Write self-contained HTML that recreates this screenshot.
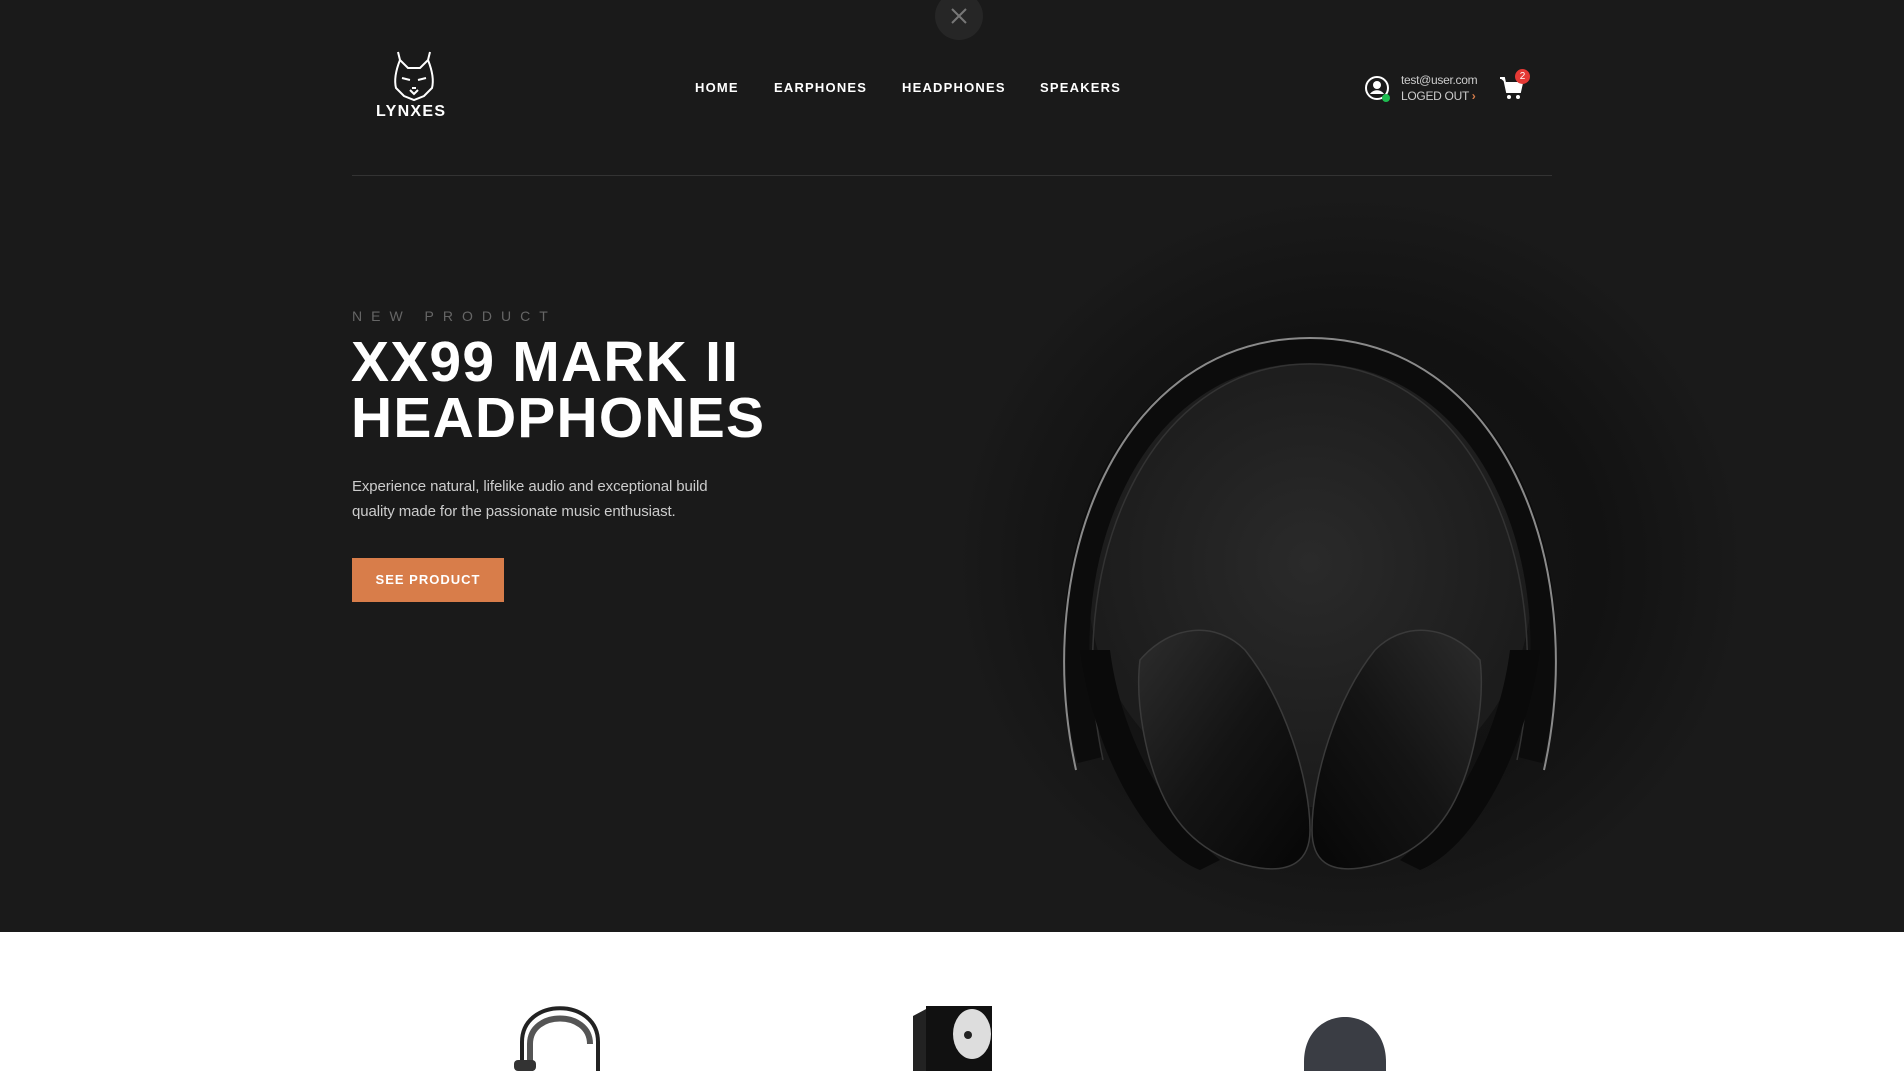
<!DOCTYPE html>
<html><head><meta charset="utf-8"><style>
*{margin:0;padding:0;box-sizing:border-box}
html,body{width:1904px;height:1071px;overflow:hidden}
body{background:#fff;font-family:"Liberation Sans",sans-serif;position:relative}
.hero{position:absolute;left:0;top:0;width:1904px;height:932px;background:#1a1a1a;overflow:hidden}
.abs{position:absolute}
.nav a{position:absolute;top:80px;color:#fff;font-size:13px;font-weight:bold;letter-spacing:1.2px;text-decoration:none}
</style></head><body>
<div class="hero">
  <div class="abs" style="left:960px;top:200px;width:780px;height:730px;background:radial-gradient(ellipse at 50% 50%,#181818 0%,#121212 45%,#1a1a1a 72%);"></div>
  <svg class="abs" style="left:0;top:0" width="1904" height="932">
    <defs>
      <radialGradient id="inner" cx="0.5" cy="0.45" r="0.5"><stop offset="0" stop-color="#2a2a2a"/><stop offset="1" stop-color="#1c1c1c"/></radialGradient>
      <linearGradient id="cup" x1="0" y1="0" x2="1" y2="1"><stop offset="0" stop-color="#2c2c2c"/><stop offset="0.5" stop-color="#141414"/><stop offset="1" stop-color="#060606"/></linearGradient>
      <linearGradient id="cup2" x1="1" y1="0" x2="0" y2="1"><stop offset="0" stop-color="#2c2c2c"/><stop offset="0.5" stop-color="#141414"/><stop offset="1" stop-color="#060606"/></linearGradient>
    </defs>
    <circle cx="1310" cy="585" r="222" fill="url(#inner)"/>
    <path d="M1090 760 C1040 560 1130 350 1310 350 C1490 350 1580 560 1530 760" fill="none" stroke="#0c0c0c" stroke-width="26"/>
    <path d="M1076 770 C1030 560 1120 338 1310 338 C1500 338 1590 560 1544 770" fill="none" stroke="#8a8a8a" stroke-width="2"/>
    <path d="M1103 760 C1062 570 1145 364 1310 364 C1475 364 1558 570 1517 760" fill="none" stroke="#333" stroke-width="1.5"/>
    <path d="M1080 650 C1095 760 1150 850 1200 870 L1220 860 C1160 810 1120 730 1110 650 Z" fill="#0a0a0a"/>
    <path d="M1540 650 C1525 760 1470 850 1420 870 L1400 860 C1460 810 1500 730 1510 650 Z" fill="#0a0a0a"/>
    <path d="M1140 660 C1170 625 1215 620 1245 650 C1285 700 1310 780 1310 830 C1310 862 1290 872 1260 868 C1220 862 1185 840 1165 800 C1145 760 1135 700 1140 660 Z" fill="url(#cup)" stroke="#3a3a3a" stroke-width="1.5"/>
    <path d="M1480 660 C1450 625 1405 620 1375 650 C1335 700 1312 780 1312 830 C1312 862 1330 872 1360 868 C1400 862 1435 840 1455 800 C1475 760 1485 700 1480 660 Z" fill="url(#cup2)" stroke="#3a3a3a" stroke-width="1.5"/>
  </svg>
  <svg class="abs" style="left:935px;top:-8px" width="48" height="48"><circle cx="24" cy="24" r="24" fill="#262626"/><path d="M17 17 L31 31 M31 17 L17 31" stroke="#777" stroke-width="2"/></svg>
  <svg class="abs" style="left:390px;top:50px" width="48" height="52" fill="none" stroke="#fff" stroke-width="2">
    <path d="M8 2 L10 10 M40 2 L38 10 M10 10 C6 20 4 30 6 38 L14 46 L24 50 L34 46 L42 38 C44 30 42 20 38 10 L30 18 L18 18 Z"/>
    <path d="M12 28 L20 30 M36 28 L28 30 M20 40 L24 44 L28 40 M22 38 L26 38"/>
  </svg>
  <div class="abs" style="left:376px;top:103px;color:#fff;font-size:16px;font-weight:bold;letter-spacing:1.3px">LYNXES</div>
  <div class="nav"><a style="left:695px">HOME</a><a style="left:774px">EARPHONES</a><a style="left:902px">HEADPHONES</a><a style="left:1040px">SPEAKERS</a></div>
  <svg class="abs" style="left:1364px;top:75px" width="30" height="30"><circle cx="13" cy="13" r="11" fill="none" stroke="#fff" stroke-width="2"/><circle cx="13" cy="10" r="4" fill="#fff"/><path d="M6 19 C9 14 17 14 20 19 Z" fill="#fff"/><circle cx="22" cy="23" r="4" fill="#1ebc50"/></svg>
  <div class="abs" style="left:1401px;top:73px;color:#ccc;font-size:12px;letter-spacing:-0.3px">test@user.com</div>
  <div class="abs" style="left:1401px;top:89px;color:#ccc;font-size:12px;letter-spacing:-0.3px">LOGED OUT <span style="color:#d87d4a;font-weight:bold">&#8250;</span></div>
  <svg class="abs" style="left:1498px;top:74px" width="28" height="28"><path d="M2 4 L6 4 L9 18 L22 18 L24 9 L8 9" fill="#fff" stroke="#fff" stroke-width="2"/><circle cx="11" cy="23" r="2" fill="#fff"/><circle cx="20" cy="23" r="2" fill="#fff"/></svg>
  <div class="abs" style="left:1515px;top:69px;width:15px;height:15px;border-radius:50%;background:#e53935;color:#fff;font-size:10px;text-align:center;line-height:15px">2</div>
  <div class="abs" style="left:352px;top:175px;width:1200px;height:1px;background:#333"></div>
  <div class="abs" style="left:352px;top:308px;color:#666;font-size:14px;letter-spacing:9px">NEW PRODUCT</div>
  <div class="abs" style="left:351px;top:334px;color:#fff;font-size:57px;font-weight:bold;line-height:56px;letter-spacing:1.2px">XX99 MARK II<br>HEADPHONES</div>
  <div class="abs" style="left:352px;top:474px;color:#ccc;font-size:15px;line-height:25px;letter-spacing:-0.1px">Experience natural, lifelike audio and exceptional build<br>quality made for the passionate music enthusiast.</div>
  <div class="abs" style="left:352px;top:558px;width:152px;height:44px;background:#d87d4a;color:#fff;font-size:13px;font-weight:bold;letter-spacing:1px;text-align:center;line-height:44px">SEE PRODUCT</div>
</div>
<svg class="abs" style="left:0;top:932px" width="1904" height="139">
  <path d="M522 139 L522 110 C522 65 598 65 598 110 L598 139" fill="none" stroke="#222" stroke-width="4"/>
  <path d="M530 139 L530 112 C530 78 590 78 590 112" fill="none" stroke="#555" stroke-width="6"/>
  <rect x="514" y="128" width="22" height="11" rx="4" fill="#333"/>
  <path d="M913 84 L928 76 L928 139 L913 139 Z" fill="#222"/>
  <rect x="926" y="74" width="66" height="65" fill="#111"/>
  <ellipse cx="972" cy="102" rx="19" ry="25" fill="#ddd"/>
  <circle cx="968" cy="103" r="4" fill="#222"/>
  <path d="M1304 139 L1304 130 C1304 70 1386 70 1386 130 L1386 139 Z" fill="#3a3d44"/>
</svg>
</body></html>
